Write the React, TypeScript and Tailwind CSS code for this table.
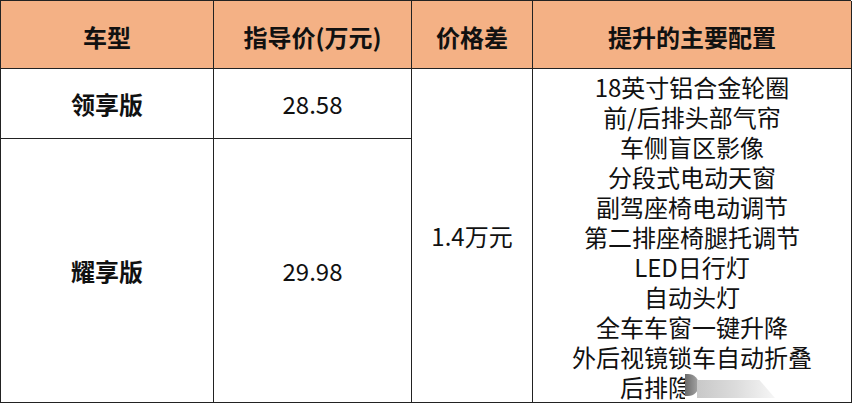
const features = [
  "18英寸铝合金轮圈",
  "前/后排头部气帘",
  "车侧盲区影像",
  "分段式电动天窗",
  "副驾座椅电动调节",
  "第二排座椅腿托调节",
  "LED日行灯",
  "自动头灯",
  "全车车窗一键升降",
  "外后视镜锁车自动折叠",
  "后排隐私玻璃",
];

const cell = "flex items-center justify-center border-r-[1.5px] border-b-[1.5px] border-[#222]";
const head = `${cell} bg-[#f4b185] font-bold pt-1`;

export default function App() {
  return (
    <div
      className="w-[852px] h-[411px] bg-white text-[#111] text-[24px] leading-[30px]"
      style={{ fontFamily: '"Noto Sans CJK SC", "Noto Sans", sans-serif' }}
    >
      <div className="relative grid grid-cols-[213px_198px_121px_319px] grid-rows-[68px_70px_264px] border-l-[1.5px] border-t-[1.5px] border-[#222] w-[851px]">
        <div className={head}>车型</div>
        <div className={head}>指导价(万元)</div>
        <div className={head}>价格差</div>
        <div className={head}>提升的主要配置</div>

        <div className={`${cell} font-bold`}>领享版</div>
        <div className={cell}>28.58</div>
        <div className={`${cell} row-span-2`}>1.4万元</div>
        <div className={`${cell} row-span-2 flex-col justify-start pt-[3px]`}>
          {features.map((f) => (
            <div key={f} className="whitespace-nowrap">
              {f}
            </div>
          ))}
        </div>

        <div className={`${cell} font-bold`}>耀享版</div>
        <div className={cell}>29.98</div>

        {/* watermark blob over last line */}
        <div className="absolute left-[684px] top-[371px] w-[92px] h-[28px] bg-white overflow-hidden">
          <div className="absolute left-0 top-[2px] w-[14px] h-[22px] rounded-r-full bg-gradient-to-r from-[#6b6b6b] to-[#a8a8a8]" />
          <div className="absolute left-[12px] top-[8px] w-[78px] h-[18px] bg-gradient-to-r from-[#c8c8c8] via-[#dcdcdc] to-[#f6f6f6] [clip-path:polygon(0_0,80%_0,100%_100%,0_100%)]" />
        </div>
      </div>
    </div>
  );
}
